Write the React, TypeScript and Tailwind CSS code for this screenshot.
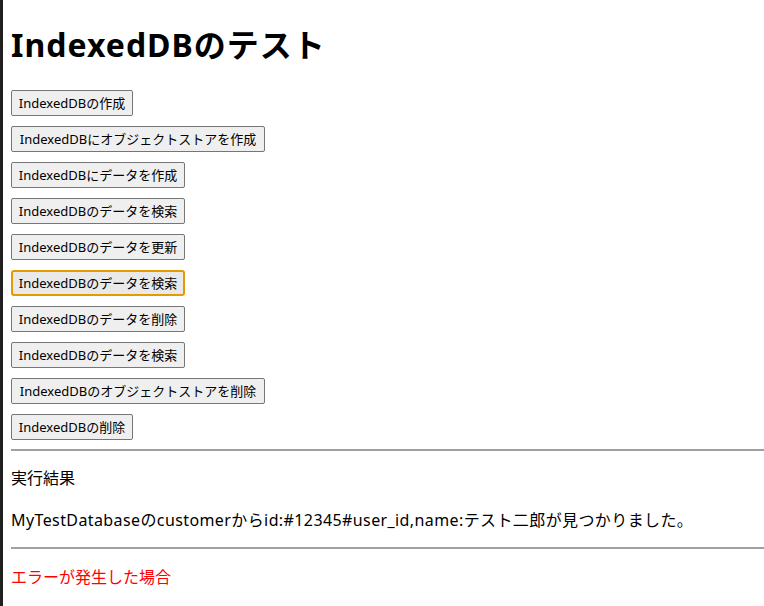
const buttons: { label: string; width: string; focused?: boolean }[] = [
  { label: "IndexedDBの作成", width: "w-[122px]" },
  { label: "IndexedDBにオブジェクトストアを作成", width: "w-[254px]" },
  { label: "IndexedDBにデータを作成", width: "w-[174px]" },
  { label: "IndexedDBのデータを検索", width: "w-[174px]" },
  { label: "IndexedDBのデータを更新", width: "w-[174px]" },
  { label: "IndexedDBのデータを検索", width: "w-[174px]", focused: true },
  { label: "IndexedDBのデータを削除", width: "w-[174px]" },
  { label: "IndexedDBのデータを検索", width: "w-[174px]" },
  { label: "IndexedDBのオブジェクトストアを削除", width: "w-[254px]" },
  { label: "IndexedDBの削除", width: "w-[122px]" },
];

export default function App() {
  return (
    <div className="flex min-h-[606px] bg-white font-['Noto_Sans','Noto_Sans_CJK_JP',sans-serif] text-black">
      <div className="w-[3px] shrink-0 bg-[#202020]" />
      <div className="flex-1 pl-2">
        <h1 className="mt-[26px] mb-[27px] text-[32px] font-bold leading-[37px] tracking-[1px]">
          IndexedDBのテスト
        </h1>

        <div className="flex flex-col items-start gap-[10px]">
          {buttons.map((b, i) => (
            <button
              key={i}
              className={
                b.focused
                  ? `${b.width} h-[26px] rounded-[3px] border-2 border-[#e59a00] bg-[#e9e9e9] text-[13px] leading-none`
                  : `${b.width} h-[26px] rounded-[2px] border border-[#767676] bg-[#efefef] text-[13px] leading-none`
              }
            >
              {b.label}
            </button>
          ))}
        </div>

        <hr className="mt-[9px] border-t-2 border-[#a0a0a0]" />

        <p className="mt-[15px] text-[16px] leading-[24px]">実行結果</p>
        <p className="mt-[18px] text-[16px] leading-[24px] tracking-[0.4px]">
          MyTestDatabaseのcustomerからid:#12345#user_id,name:テスト二郎が見つかりました。
        </p>

        <hr className="mt-[15px] border-t-2 border-[#a0a0a0]" />

        <p className="mt-[16px] text-[16px] leading-[24px] text-[#ff0000]">エラーが発生した場合</p>
      </div>
    </div>
  );
}
